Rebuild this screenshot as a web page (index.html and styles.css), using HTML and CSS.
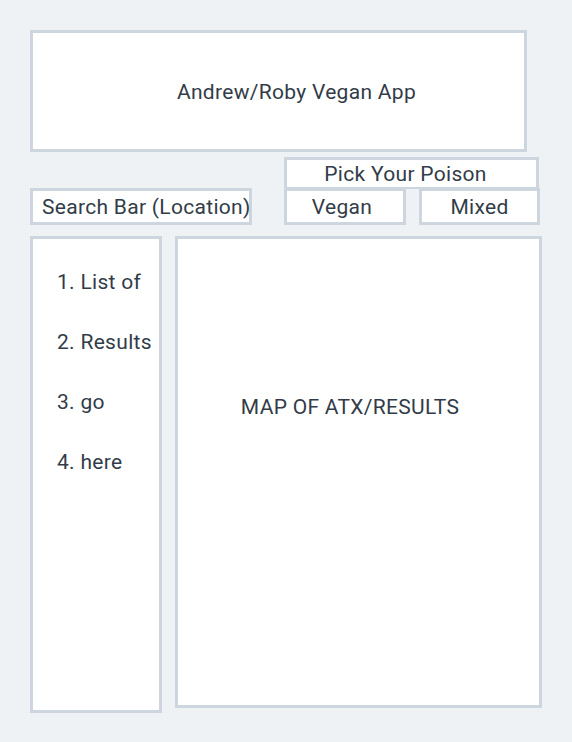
FILE: index.html
```html
<!DOCTYPE html>
<html>
<head>
<meta charset="utf-8">
<link rel="stylesheet" href="styles.css">
</head>
<body>
<div class="page">
  <div class="box header">Andrew/Roby Vegan App</div>
  <div class="controls">
    <div class="box search">Search Bar (Location)</div>
    <div class="poison">
      <div class="box poison-title">Pick Your Poison</div>
      <div class="choices">
        <div class="box choice vegan">Vegan</div>
        <div class="box choice mixed">Mixed</div>
      </div>
    </div>
  </div>
  <div class="main">
    <div class="box list">
      <div class="item">1. List of</div>
      <div class="item">2. Results</div>
      <div class="item">3. go</div>
      <div class="item">4. here</div>
    </div>
    <div class="box map">MAP OF ATX/RESULTS</div>
  </div>
</div>
</body>
</html>
```

FILE: styles.css
```css
html, body {
  margin: 0;
  padding: 0;
  background: #eff2f5;
}
body {
  font-family: Roboto, "Liberation Sans", sans-serif;
  font-size: 21px;
  letter-spacing: 0.3px;
  color: #323c48;
  width: 572px;
  height: 742px;
  overflow: hidden;
}
.page {
  padding: 30px 0 0 30px;
}
.box {
  background: #ffffff;
  border: 3px solid #cdd5df;
  box-sizing: border-box;
}
.header {
  width: 497px;
  height: 122px;
  display: flex;
  align-items: center;
  justify-content: center;
  padding-left: 36px;
  padding-top: 2px;
}
.controls {
  display: flex;
  align-items: flex-end;
  margin-top: 5px;
}
.search {
  width: 222px;
  height: 37px;
  margin-right: 32px;
  display: flex;
  align-items: center;
  padding-left: 9px;
  white-space: nowrap;
}
.poison {
  display: flex;
  flex-direction: column;
}
.poison-title {
  width: 255px;
  height: 32px;
  display: flex;
  align-items: center;
  justify-content: center;
  padding-right: 12px;
  border-bottom-width: 2px;
}
.choices {
  display: flex;
  gap: 13px;
  margin-top: -1px;
}
.choice {
  height: 37px;
  display: flex;
  align-items: center;
  justify-content: center;
}
.vegan { width: 122px; padding-right: 6px; }
.mixed { width: 121px; }
.main {
  display: flex;
  align-items: flex-start;
  gap: 13px;
  margin-top: 11px;
}
.list {
  width: 132px;
  height: 477px;
  padding: 31px 0 0 24px;
  display: flex;
  flex-direction: column;
  gap: 36px;
  white-space: nowrap;
}
.item {
  height: 24px;
  line-height: 24px;
}
.map {
  width: 367px;
  height: 472px;
  text-align: center;
  padding-top: 156px;
  padding-right: 17px;
  line-height: 24px;
}
```
